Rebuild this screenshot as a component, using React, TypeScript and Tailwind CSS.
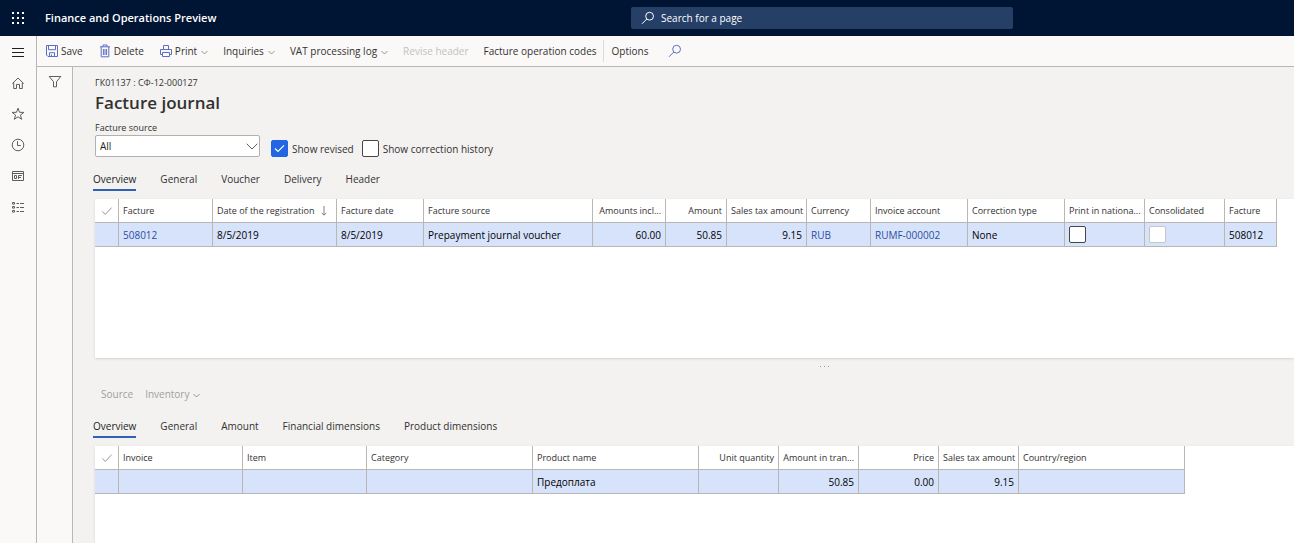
import { useState } from "react";
import type { ReactNode } from "react";
import clsx from "clsx";

type Column = {
  label: string;
  width: number;
  value?: string;
  align?: "right";
  link?: boolean;
  sorted?: boolean;
  check?: "enabled" | "disabled";
};

const factureColumns: Column[] = [
  { label: "Facture", width: 94, value: "508012", link: true },
  { label: "Date of the registration", width: 124, value: "8/5/2019", sorted: true },
  { label: "Facture date", width: 87, value: "8/5/2019" },
  { label: "Facture source", width: 169, value: "Prepayment journal voucher" },
  { label: "Amounts incl...", width: 73, value: "60.00", align: "right" },
  { label: "Amount", width: 61, value: "50.85", align: "right" },
  { label: "Sales tax amount", width: 80, value: "9.15", align: "right" },
  { label: "Currency", width: 64, value: "RUB", link: true },
  { label: "Invoice account", width: 97, value: "RUMF-000002", link: true },
  { label: "Correction type", width: 97, value: "None" },
  { label: "Print in nationa...", width: 80, check: "enabled" },
  { label: "Consolidated", width: 80, check: "disabled" },
  { label: "Facture", width: 52, value: "508012" },
];

const lineColumns: Column[] = [
  { label: "Invoice", width: 124 },
  { label: "Item", width: 124 },
  { label: "Category", width: 166 },
  { label: "Product name", width: 166, value: "Предоплата" },
  { label: "Unit quantity", width: 80, align: "right" },
  { label: "Amount in tran...", width: 80, value: "50.85", align: "right" },
  { label: "Price", width: 80, value: "0.00", align: "right" },
  { label: "Sales tax amount", width: 80, value: "9.15", align: "right" },
  { label: "Country/region", width: 166 },
];

const SELECT_WIDTH = 24;

function Icon({ children, className }: { children: ReactNode; className?: string }) {
  return (
    <svg
      viewBox="0 0 14 14"
      fill="none"
      stroke="currentColor"
      aria-hidden="true"
      className={clsx("shrink-0", className ?? "size-3.5")}
    >
      {children}
    </svg>
  );
}

function Chevron() {
  return (
    <svg viewBox="0 0 7 5" fill="none" stroke="currentColor" aria-hidden="true" className="mt-0.5 h-[5px] w-[7px] shrink-0 text-[#979593]">
      <path d="M.5 1l3 3 3-3" />
    </svg>
  );
}

function SearchIcon({ className }: { className?: string }) {
  return (
    <Icon className={className}>
      <circle cx="8.6" cy="5.2" r="3.9" />
      <path d="M5.8 8L1 12.8" />
    </Icon>
  );
}

const railItems = [
  {
    label: "Expand the navigation pane",
    icon: <path d="M1 3.5h12M1 7.5h12M1 11.5h12" stroke="#201f1e" />,
  },
  {
    label: "Home",
    icon: <path d="M1.3 7.6L7 2l5.7 5.6M2.7 6.5v6h2.8V8.4h3v4.1h2.8v-6" />,
  },
  {
    label: "Favorites",
    icon: <path d="M7 1.2l1.5 4.1 4.4.1-3.5 2.7 1.3 4.2L7 9.8l-3.7 2.5 1.3-4.2L1.1 5.4l4.4-.1z" />,
  },
  {
    label: "Recent",
    icon: (
      <>
        <circle cx="7" cy="7" r="5.8" />
        <path d="M6.5 3.2v4.3h3.3" />
      </>
    ),
  },
  {
    label: "Workspaces",
    icon: <path d="M1.5 2.5h11v9h-11zM1.5 4.5h11M3.5 6.5h2v3h-2zM7.5 9.9V6.5h3.3M7.5 8.5h2.5" />,
  },
  {
    label: "Modules",
    icon: <path d="M1.5 2.5h2v1.6h-2zM1.5 6.5h2v1.6h-2zM1.5 10.5h2v1.6h-2zM5.5 3.5H8M9 3.5h4M5.5 7.5H8M9 7.5h4M5.5 11.5H8M9 11.5h4" />,
  },
];

function CheckBox({ id, label, defaultChecked, disabled }: { id: string; label?: string; defaultChecked?: boolean; disabled?: boolean }) {
  return (
    <span className="relative flex size-[17px] shrink-0">
      <input
        id={id}
        type="checkbox"
        aria-label={label}
        defaultChecked={defaultChecked}
        disabled={disabled}
        className="peer size-full appearance-none rounded-[2px] border border-[#484644] bg-white checked:border-[#2266e3] checked:bg-[#2266e3] disabled:border-[#c8c6c4]"
      />
      <svg viewBox="0 0 17 17" fill="none" stroke="white" aria-hidden="true" className="pointer-events-none absolute inset-0 hidden peer-checked:block">
        <path d="M4 8.5l3 3 6-6.2" strokeWidth="1.2" />
      </svg>
    </span>
  );
}

function Tabs({ label, tabs }: { label: string; tabs: string[] }) {
  const [active, setActive] = useState(tabs[0]);
  return (
    <div role="tablist" aria-label={label} className="mt-3 flex gap-6 px-5">
      {tabs.map((tab) => (
        <button
          key={tab}
          type="button"
          role="tab"
          aria-selected={tab === active}
          onClick={() => setActive(tab)}
          className={clsx(
            "border-b-2 leading-5 whitespace-nowrap",
            tab === active ? "border-[#2f62b5] font-medium text-[#201f1e]" : "border-transparent",
          )}
        >
          {tab}
        </button>
      ))}
    </div>
  );
}

function Grid({ label, columns }: { label: string; columns: Column[] }) {
  const total = columns.reduce((sum, c) => sum + c.width, SELECT_WIDTH);
  return (
    <table aria-label={label} style={{ width: total }} className="table-fixed border-separate border-spacing-0">
      <colgroup>
        <col style={{ width: SELECT_WIDTH }} />
        {columns.map((c, i) => (
          <col key={i} style={{ width: c.width }} />
        ))}
      </colgroup>
      <thead>
        <tr className="h-6 text-[9px]">
          <th className="border-r border-b border-[#b9b7b6] p-0">
            <Icon className="mx-auto size-3 text-[#8a8886]">
              <path d="M1.5 7.5l3.5 3.5 7.5-8" />
            </Icon>
          </th>
          {columns.map((c, i) => (
            <th
              key={i}
              scope="col"
              className={clsx(
                "border-r border-b border-[#b9b7b6] px-1 py-0 font-normal whitespace-nowrap",
                c.align === "right" ? "text-right" : "text-left",
              )}
            >
              {c.sorted ? (
                <span className="flex items-center gap-1.5">
                  {c.label}
                  <svg viewBox="0 0 6 10" fill="none" stroke="currentColor" aria-hidden="true" className="h-2.5 w-1.5 text-[#797775]">
                    <path d="M3 0v9M.7 6.8L3 9.2l2.3-2.4" strokeWidth=".9" />
                  </svg>
                </span>
              ) : (
                c.label
              )}
            </th>
          ))}
        </tr>
      </thead>
      <tbody>
        <tr className="h-6 bg-[#d7e3fb] text-black">
          <td className="border-r border-b border-[#b9b7b6] p-0" />
          {columns.map((c, i) => (
            <td
              key={i}
              className={clsx(
                "border-r border-b border-[#b9b7b6] px-1 py-0 whitespace-nowrap",
                c.align === "right" && "text-right",
              )}
            >
              {c.check && <CheckBox id={`cell-${i}`} label={c.label} disabled={c.check === "disabled"} />}
              {c.link ? (
                <a href="#" className="text-[#2b4da0]">
                  {c.value}
                </a>
              ) : (
                c.value
              )}
            </td>
          ))}
        </tr>
      </tbody>
    </table>
  );
}

function ActionBar() {
  return (
    <div role="toolbar" aria-label="Actions" className="flex h-[31px] items-center border-b border-[#b9b7b6] bg-[#faf9f8] pl-2 whitespace-nowrap">
      <div className="flex items-center gap-[15px]">
        <button type="button" className="flex items-center gap-0.5">
          <Icon className="size-3.5 text-[#5c6fc7]">
            <path d="M1.5 1.5h11v11H3l-1.5-1.5zM3.5 1.5v4.2h7V1.5M4.5 12.5V8.7h5v3.8M6.5 10.5v2" />
          </Icon>
          Save
        </button>
        <button type="button" className="flex items-center gap-0.5">
          <Icon className="size-3.5 text-[#5c6fc7]">
            <path d="M2 2.8h10M5 2.8V1h4v1.8M3.2 2.8v10h7.6v-10M5.4 5v6M7 5v6M8.6 5v6" />
          </Icon>
          Delete
        </button>
        <button type="button" className="flex items-center gap-0.5">
          <Icon className="size-3.5 text-[#5c6fc7]">
            <path d="M3.5 10.5h-2v-5h11v5h-2M4.5 5.5v-4h5v4M3.5 8.5h7v4h-7z" />
          </Icon>
          <span className="mr-0.5">Print</span>
          <Chevron />
        </button>
        <button type="button" className="flex items-center gap-1">
          Inquiries
          <Chevron />
        </button>
        <button type="button" className="flex items-center gap-1">
          VAT processing log
          <Chevron />
        </button>
        <button type="button" disabled className="text-[#c3c1bf]">
          Revise header
        </button>
        <button type="button">Facture operation codes</button>
      </div>
      <div className="ml-1.5 flex h-[22px] items-center gap-5 border-l border-[#dddbd9] pl-2">
        <button type="button" className="font-medium">
          Options
        </button>
        <button type="button" aria-label="Search actions">
          <SearchIcon className="size-3.5 text-[#5c6fc7]" />
        </button>
      </div>
    </div>
  );
}

export default function App() {
  return (
    <div className="flex min-h-screen flex-col bg-[#f3f2f1] font-['Open_Sans','Noto_Sans',sans-serif] text-[10px] leading-4 text-[#323130]">
      <header className="grid h-9 grid-cols-[631fr_382fr_281fr] items-center bg-[#001433] text-white">
        <div className="flex items-center">
          <button type="button" aria-label="App launcher" className="flex w-9 justify-center">
            <svg viewBox="0 0 12 12" fill="currentColor" aria-hidden="true" className="size-3">
              {[0, 5, 10].map((y) => [0, 5, 10].map((x) => <rect key={`${x}-${y}`} x={x} y={y} width="2" height="2" />))}
            </svg>
          </button>
          <span className="ml-[9px] text-[11px] font-semibold">Finance and Operations Preview</span>
        </div>
        <label className="flex h-[22px] items-center gap-1.5 rounded-[2px] bg-[#263f66] pl-2.5">
          <SearchIcon />
          <input
            type="search"
            aria-label="Search for a page"
            placeholder="Search for a page"
            className="min-w-0 flex-1 bg-transparent outline-none placeholder:text-white"
          />
        </label>
      </header>

      <div className="flex flex-1">
        <nav aria-label="Navigation" className="flex w-[37px] shrink-0 flex-col border-r border-[#b9b7b6] bg-[#faf9f8] text-[#605e5c]">
          {railItems.map((item) => (
            <button key={item.label} type="button" aria-label={item.label} className="flex h-[31px] items-center justify-center">
              <Icon>{item.icon}</Icon>
            </button>
          ))}
        </nav>

        <div className="flex min-w-0 flex-1 flex-col">
          <ActionBar />

          <div className="flex flex-1">
            <aside className="flex w-9 shrink-0 flex-col items-center border-r border-[#b9b7b6] bg-[#faf9f8] pt-2">
              <button type="button" aria-label="Filters">
                <Icon className="size-3.5 text-[#605e5c]">
                  <path d="M1.2 1.5h11.6L8.5 6.7v5.1h-3V6.7z" />
                </Icon>
              </button>
            </aside>

            <main className="flex min-w-0 flex-1 flex-col pt-2">
              <div className="px-[22px]">
                <p className="text-[9px] leading-4">ГК01137 : СФ-12-000127</p>
                <h1 className="text-[17px] leading-6 font-semibold">Facture journal</h1>
                <div className="mt-1.5 flex items-end">
                  <div className="mr-[11px] w-[165px]">
                    <label htmlFor="source" className="block text-[9px] leading-[14px]">
                      Facture source
                    </label>
                    <div className="relative">
                      <select id="source" className="block h-[22px] w-full appearance-none rounded-[2px] border border-[#b3b0ad] bg-white px-1 text-[#201f1e]">
                        <option>All</option>
                      </select>
                      <svg viewBox="0 0 12 7" fill="none" stroke="#605e5c" aria-hidden="true" className="pointer-events-none absolute top-2 right-0.5 h-[7px] w-3">
                        <path d="M.7.7L6 6 11.3.7" />
                      </svg>
                    </div>
                  </div>
                  <label htmlFor="revised" className="mr-2 flex items-center gap-1">
                    <CheckBox id="revised" defaultChecked />
                    Show revised
                  </label>
                  <label htmlFor="history" className="flex items-center gap-1">
                    <CheckBox id="history" />
                    Show correction history
                  </label>
                </div>
              </div>

              <Tabs label="Facture" tabs={["Overview", "General", "Voucher", "Delivery", "Header"]} />
              <section className="mt-2 ml-[22px] min-h-[159px] bg-white shadow-sm">
                <Grid label="Factures" columns={factureColumns} />
              </section>

              <div className="flex h-4 items-center justify-center pl-[282px] text-[#979593]">
                <svg viewBox="0 0 9 1" fill="currentColor" aria-hidden="true" className="h-px w-[9px]">
                  <path d="M0 0h1v1H0zM4 0h1v1H4zM8 0h1v1H8z" />
                </svg>
              </div>

              <div role="toolbar" aria-label="Lines" className="mt-2.5 flex gap-3 px-7 leading-5 text-[#a19f9d]">
                <button type="button" disabled>
                  Source
                </button>
                <button type="button" disabled className="flex items-center gap-1">
                  Inventory
                  <Chevron />
                </button>
              </div>
              <Tabs label="Lines" tabs={["Overview", "General", "Amount", "Financial dimensions", "Product dimensions"]} />
              <section className="mt-2 ml-[22px] flex-1 bg-white shadow-sm">
                <Grid label="Facture lines" columns={lineColumns} />
              </section>
            </main>
          </div>
        </div>
      </div>
    </div>
  );
}
